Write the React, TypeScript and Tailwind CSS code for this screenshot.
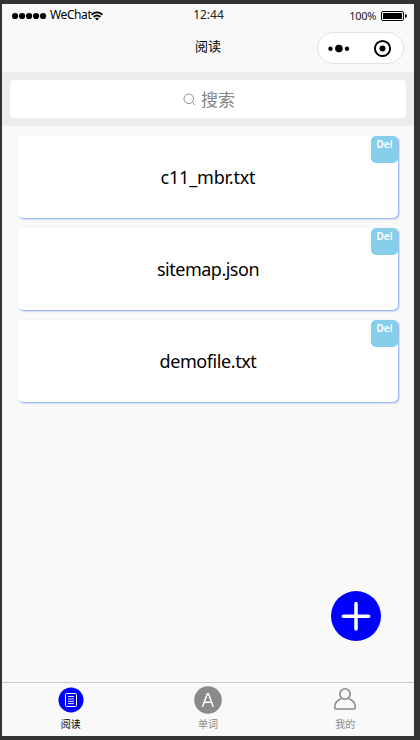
import React from 'react';

const files = [
  { name: 'c11_mbr.txt', spacing: 'tracking-[-0.2px]' },
  { name: 'sitemap.json', spacing: 'tracking-[-0.5px]' },
  { name: 'demofile.txt', spacing: 'tracking-[-0.43px]' },
];

function StatusBar() {
  return (
    <div className="grid h-6 grid-cols-3 items-center pl-[10px] pr-[7px] text-[12px] leading-4">
      <div className="flex items-center">
        <svg width="35" height="8" viewBox="0 0 35 8" className="-mt-px">
          {[3.1, 10.1, 17.1, 24.1, 31.1].map((x) => (
            <circle key={x} cx={x} cy="4" r="3.1" />
          ))}
        </svg>
        <span className="ml-[3px] -mt-[2px] tracking-[-0.4px]">WeChat</span>
        <svg width="12" height="10" viewBox="0 0 12 10" fill="none" stroke="#000" strokeWidth="1.8" className="-mt-px">
          <path d="M.5 3.7Q6-.9 11.5 3.7" />
          <path d="M2.6 6Q6 3 9.4 6" />
          <path d="M4 7.4Q6 6 8 7.4L6 9.6Z" fill="#000" stroke="none" />
        </svg>
      </div>
      <span className="-ml-[2px] -mt-[2px] text-center text-[12px] text-[#222]">12:44</span>
      <div className="flex items-center justify-end">
        <span className="mr-[5px] text-[11px] tracking-[-0.3px] text-[#222]">100%</span>
        <svg width="26" height="10" viewBox="0 0 26 10" className="-mt-px">
          <rect x=".5" y=".5" width="22" height="9" rx="1.5" fill="none" stroke="#000" />
          <rect x="2" y="2" width="19" height="6" rx=".5" />
          <path d="M24 3Q26 3.5 26 5T24 7Z" />
        </svg>
      </div>
    </div>
  );
}

function Header() {
  return (
    <header className="h-[68px] shrink-0 bg-[#f9f9f9]">
      <StatusBar />
      <div className="grid h-10 grid-cols-3 items-start px-[10px] pt-1">
        <span />
        <h1 className="pt-[4px] text-center text-[13px] leading-[20px]">阅读</h1>
        <div className="h-8 w-[87px] justify-self-end rounded-full border border-[#e2e2e2] bg-white">
          <svg width="85" height="30" viewBox="0 0 85 30">
            <circle cx="12.5" cy="15.7" r="2.2" />
            <circle cx="20.9" cy="15.6" r="3.8" />
            <circle cx="29" cy="15.7" r="2.2" />
            <circle cx="64.5" cy="15.5" r="7.6" fill="none" stroke="#000" strokeWidth="2" />
            <circle cx="64.5" cy="15.5" r="3" />
          </svg>
        </div>
      </div>
    </header>
  );
}

function FileCard({ name, spacing }: { name: string; spacing: string }) {
  return (
    <li className="relative flex h-[82px] items-center justify-center rounded-[5px] bg-white shadow-[1px_1px_2px_#7ea5f0]">
      <span className={`text-[18px] leading-6 ${spacing}`}>{name}</span>
      <button className="absolute right-0 top-0 flex h-[27px] w-[27px] justify-center rounded-[5px] bg-[#87ceeb] pt-px text-[10px] font-semibold leading-[15px] text-white">
        Del
      </button>
    </li>
  );
}

function ReadIcon() {
  return (
    <svg width="28" height="28" viewBox="0 0 28 28" fill="none" stroke="#fff">
      <circle cx="14" cy="14" r="12.5" fill="#00f" stroke="none" />
      <rect x="8.5" y="7.5" width="11" height="13" rx="1" />
      <path d="M11 10.5h6M11 13h6M11 15.3h6M11 17.6h6" strokeWidth=".9" />
    </svg>
  );
}

function WordIcon() {
  return (
    <svg width="28" height="28" viewBox="0 0 28 28" fill="none" stroke="#fff" strokeWidth="1.5" strokeLinecap="round" strokeLinejoin="round">
      <circle cx="14" cy="14" r="13.8" fill="#8a8a8a" stroke="none" />
      <path d="M8.7 20.2L13.3 7.7H14.5L19 20.2M10.2 16.3h7.3" />
    </svg>
  );
}

function UserIcon() {
  return (
    <svg width="28" height="28" viewBox="0 0 28 28" fill="none" stroke="#8a8a8a" strokeWidth="1.6" strokeLinejoin="round">
      <circle cx="14" cy="8" r="5.2" />
      <path d="M10.2 12.8C6.4 14.1 3.8 17.7 3.8 21.6Q3.8 23 4.9 23H23.2Q24.3 23 24.3 21.6C24.3 17.7 21.6 14.1 17.8 12.8" />
    </svg>
  );
}

export default function App() {
  return (
    <div className="h-[740px] w-[420px] bg-[#333335] pb-1 pl-[2px] pr-[6px] pt-1 font-['Noto_Sans','Noto_Sans_CJK_SC',sans-serif] text-black">
      <div className="relative flex h-[732px] flex-col overflow-hidden bg-[#f9f9f9]">
        <Header />
        <div className="h-[54px] shrink-0 bg-[#ededed] p-2">
          <div className="flex h-[38px] items-center justify-center rounded-[4px] bg-white text-[#858585]">
            <svg width="13" height="13" viewBox="0 0 13 13" fill="none" stroke="currentColor" className="ml-[2px] mr-[5px]">
              <circle cx="5.8" cy="5.8" r="4.8" strokeWidth=".9" />
              <path d="M9.3 9.3L12 11.8" />
            </svg>
            <span className="pt-[2px] text-[17px] leading-6">搜索</span>
          </div>
        </div>
        <ul className="flex flex-1 flex-col gap-[10px] px-4 pt-[10px]">
          {files.map((file) => (
            <FileCard key={file.name} {...file} />
          ))}
        </ul>
        <button aria-label="添加" className="absolute bottom-[95px] right-[33px] h-[50px] w-[50px] rounded-full bg-[#00f]">
          <svg width="50" height="50" viewBox="0 0 50 50" stroke="#fff" strokeWidth="3.5" strokeLinecap="round">
            <path d="M25 12.5V38M12.3 25.3H37.7" />
          </svg>
        </button>
        <nav className="grid h-[54px] shrink-0 grid-cols-3 border-t border-[#cbcbcb] text-[10px] leading-[14px]">
          <div className="flex flex-col items-center pt-[3px]">
            <ReadIcon />
            <span className="mt-[3px]">阅读</span>
          </div>
          <div className="flex flex-col items-center pt-[3px] text-[#8a8a8a]">
            <WordIcon />
            <span className="mt-[3px]">单词</span>
          </div>
          <div className="flex flex-col items-center pt-[3px] text-[#8a8a8a]">
            <UserIcon />
            <span className="mt-[3px]">我的</span>
          </div>
        </nav>
      </div>
    </div>
  );
}
